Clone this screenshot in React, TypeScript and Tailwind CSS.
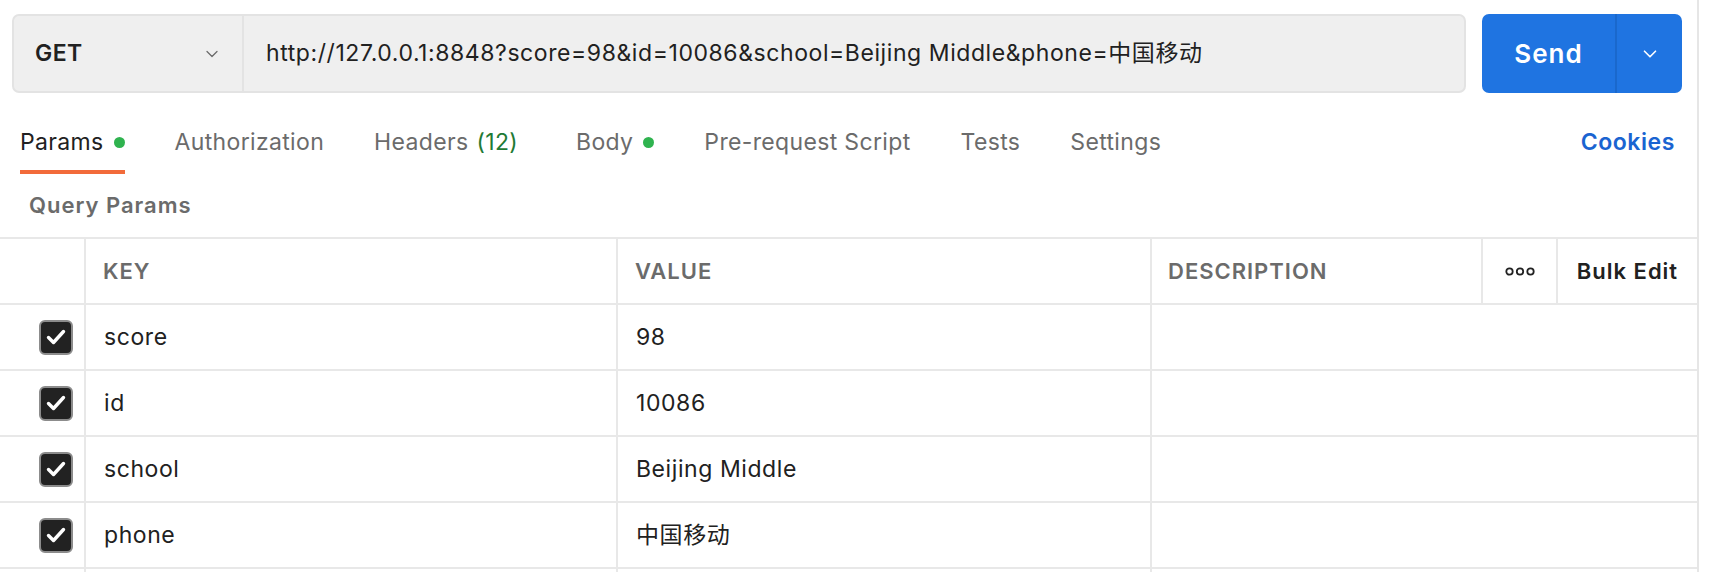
import { ChevronDown } from "lucide-react";

const rows = [
  { key: "score", value: "98" },
  { key: "id", value: "10086" },
  { key: "school", value: "Beijing Middle" },
  { key: "phone", value: "中国移动" },
];

function Checkbox() {
  return (
    <div className="w-[34px] h-[35px] rounded-[6px] bg-[#222222] border-2 border-[#8c8c8c] flex items-center justify-center">
      <svg width="22" height="18" viewBox="0 0 22 18" fill="none">
        <path d="M3.5 9.5L8.5 14.5L18.5 3.5" stroke="white" strokeWidth="3.4" strokeLinecap="round" strokeLinejoin="round" />
      </svg>
    </div>
  );
}

function Tab({ label, active, dot, count, extra }: { label: string; active?: boolean; dot?: boolean; count?: string; extra?: string }) {
  return (
    <div
      className={
        "h-[60px] flex items-center gap-[10px] border-b-4 " +
        (active ? "border-[#f26b3a] text-[#212121] " : "border-transparent text-[#6b6b6b] ") +
        (extra ?? "")
      }
    >
      <span>
        {label}
        {count && <span className="text-[#1f7a35] ml-[8px]">{count}</span>}
      </span>
      {dot && <span className="w-[11px] h-[11px] rounded-full bg-[#2fb34f]" />}
    </div>
  );
}

export default function App() {
  return (
    <div className="w-[1724px] h-[572px] bg-white overflow-hidden font-['Inter','Noto_Sans_CJK_SC',sans-serif]">
      <div className="w-[1699px] h-full border-r-2 border-[#e6e6e6]">
        {/* URL bar */}
        <div className="flex gap-4 pl-[12px] pr-[15px] pt-[14px]">
          <div className="flex flex-1 h-[79px] rounded-[7px] border-2 border-[#e3e3e3] bg-[#efefef]">
            <div className="w-[230px] flex items-center justify-between pl-[21px] pr-[20px] border-r-2 border-[#e3e3e3]">
              <span className="text-[23px] tracking-[0.02em] font-semibold text-[#212121]">GET</span>
              <ChevronDown size={20} strokeWidth={1.5} className="text-[#6b6b6b]" />
            </div>
            <div className="flex items-center pl-[22px] text-[23px] tracking-[0.025em] text-[#212121]">
              http://127.0.0.1:8848?score=98&amp;id=10086&amp;school=Beijing Middle&amp;phone=中国移动
            </div>
          </div>
          <div className="w-[200px] h-[79px] flex rounded-[7px] bg-[#1f74e1] text-white">
            <div className="w-[135px] flex items-center justify-center border-r-2 border-[#1a68cc] text-[26px] tracking-[0.04em] font-semibold">
              Send
            </div>
            <div className="flex-1 flex items-center justify-center">
              <ChevronDown size={22} strokeWidth={1.8} />
            </div>
          </div>
        </div>

        {/* Tabs */}
        <div className="flex items-end justify-between pl-[20px] pr-[22px] mt-[21px] text-[23px] tracking-[0.015em]">
          <div className="flex gap-[50px]">
            <Tab label="Params" active dot />
            <Tab label="Authorization" />
            <Tab label="Headers" count="(12)" />
            <Tab label="Body" dot extra="ml-[8px]" />
            <Tab label="Pre-request Script" />
            <Tab label="Tests" />
            <Tab label="Settings" />
          </div>
          <div className="h-[60px] flex items-center pb-[4px] font-semibold tracking-[0.025em] text-[#1a64d1]">Cookies</div>
        </div>

        {/* Query Params */}
        <div className="h-[65px] flex items-center pl-[29px] text-[22px] tracking-[0.045em] font-semibold text-[#6b6b6b] border-b-2 border-[#e8e8e8]">
          Query Params
        </div>

        {/* Table header */}
        <div className="flex h-[66px] border-b-2 border-[#e8e8e8] text-[22px] tracking-[0.045em] font-semibold text-[#6b6b6b]">
          <div className="w-[86px] border-r-2 border-[#e8e8e8]" />
          <div className="w-[532px] flex items-center pl-[17px] border-r-2 border-[#e8e8e8]">KEY</div>
          <div className="w-[534px] flex items-center pl-[17px] border-r-2 border-[#e8e8e8]">VALUE</div>
          <div className="w-[331px] flex items-center pl-[16px] border-r-2 border-[#e8e8e8]">DESCRIPTION</div>
          <div className="w-[75px] flex items-center justify-center border-r-2 border-[#e8e8e8]">
            <svg width="30" height="9" viewBox="0 0 30 9" fill="none">
              <circle cx="4.5" cy="4.5" r="3.2" stroke="#212121" strokeWidth="1.8" />
              <circle cx="15" cy="4.5" r="3.2" stroke="#212121" strokeWidth="1.8" />
              <circle cx="25.5" cy="4.5" r="3.2" stroke="#212121" strokeWidth="1.8" />
            </svg>
          </div>
          <div className="flex-1 flex items-center justify-center text-[#212121]">Bulk Edit</div>
        </div>

        {/* Rows */}
        {rows.map((r) => (
          <div key={r.key} className="flex h-[66px] border-b-2 border-[#e8e8e8] text-[23px] tracking-[0.025em] text-[#212121]">
            <div className="w-[86px] flex items-center justify-end pr-[11px] border-r-2 border-[#e8e8e8]">
              <Checkbox />
            </div>
            <div className="w-[532px] flex items-center pl-[18px] border-r-2 border-[#e8e8e8]">{r.key}</div>
            <div className="w-[534px] flex items-center pl-[18px] border-r-2 border-[#e8e8e8]">{r.value}</div>
            <div className="flex-1" />
          </div>
        ))}
        <div className="flex h-[66px]">
          <div className="w-[86px] border-r-2 border-[#e8e8e8]" />
          <div className="w-[532px] border-r-2 border-[#e8e8e8]" />
          <div className="w-[534px] border-r-2 border-[#e8e8e8]" />
        </div>
      </div>
    </div>
  );
}
